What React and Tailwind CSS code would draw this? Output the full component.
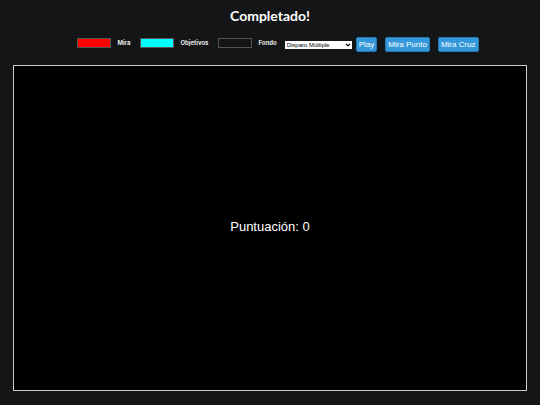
import { useState } from "react";

const ColorPicker = ({ id, label, value, onChange }) => (
  <div className="flex items-center gap-1.5">
    <input
      id={id}
      type="color"
      value={value}
      onChange={(e) => onChange(e.target.value)}
      className="block h-2.5 w-[34px] cursor-pointer appearance-none bg-transparent p-0 [&::-webkit-color-swatch-wrapper]:p-0 [&::-webkit-color-swatch]:rounded-none [&::-webkit-color-swatch]:border [&::-webkit-color-swatch]:border-[#555555]"
    />
    <label
      htmlFor={id}
      className="font-['Inter',sans-serif] text-[6px] leading-[10px] font-bold text-[#e8e8e8]"
    >
      {label}
    </label>
  </div>
);

const Boton = ({ onClick, children }) => (
  <button
    type="button"
    onClick={onClick}
    className="h-[15px] cursor-pointer rounded-[2px] border border-[#2377b3] bg-[#3498db] px-0.5 font-['Liberation_Sans',sans-serif] text-[8px] leading-[13px] whitespace-nowrap"
  >
    {children}
  </button>
);

export default function App() {
  const [mira, setMira] = useState("#ff0000");
  const [objetivos, setObjetivos] = useState("#00ffff");
  const [fondo, setFondo] = useState("#141517");
  const [modo, setModo] = useState("multiple");
  const [tipoMira, setTipoMira] = useState("punto");
  const [puntuacion, setPuntuacion] = useState(0);

  return (
    <main className="flex min-h-screen flex-col bg-[#141517] px-[13px] pt-2 text-white">
      <h1 className="text-center font-['Lato',sans-serif] text-[14px] leading-4 font-bold">
        Completado!
      </h1>

      <div className="mt-3 flex items-center justify-center gap-2 pt-px pb-px pl-4">
        <div className="flex gap-2.5 pb-1">
          <ColorPicker id="mira" label="Mira" value={mira} onChange={setMira} />
          <ColorPicker
            id="objetivos"
            label="Objetivos"
            value={objetivos}
            onChange={setObjetivos}
          />
          <ColorPicker
            id="fondo"
            label="Fondo"
            value={fondo}
            onChange={setFondo}
          />
        </div>
        <div className="flex items-center gap-1">
          <div className="relative flex">
            <select
              aria-label="Modo de juego"
              value={modo}
              onChange={(e) => setModo(e.target.value)}
              className="h-2 w-[67px] appearance-none bg-white pl-0.5 font-['Liberation_Sans',sans-serif] text-[6px] leading-[8px] text-black"
            >
              <option value="multiple">Disparo Múltiple</option>
              <option value="unico">Disparo Único</option>
            </select>
            <svg
              viewBox="0 0 6 4"
              className="pointer-events-none absolute top-0.5 right-px h-1 w-1.5"
              fill="none"
              stroke="black"
              strokeWidth="1.2"
            >
              <path d="M1 0.8 3 2.8 5 0.8" />
            </svg>
          </div>
          <Boton onClick={() => setPuntuacion(0)}>Play</Boton>
        </div>
        <Boton onClick={() => setTipoMira("punto")}>Mira Punto</Boton>
        <Boton onClick={() => setTipoMira("cruz")}>Mira Cruz</Boton>
      </div>

      <section
        data-mira={tipoMira}
        className="mt-3 flex aspect-[514/326] w-full items-center justify-center border border-[#cccccc] bg-black pb-0.5"
      >
        <p className="font-['Liberation_Sans',sans-serif] text-[13px] leading-4">
          Puntuación: {puntuacion}
        </p>
      </section>
    </main>
  );
}
